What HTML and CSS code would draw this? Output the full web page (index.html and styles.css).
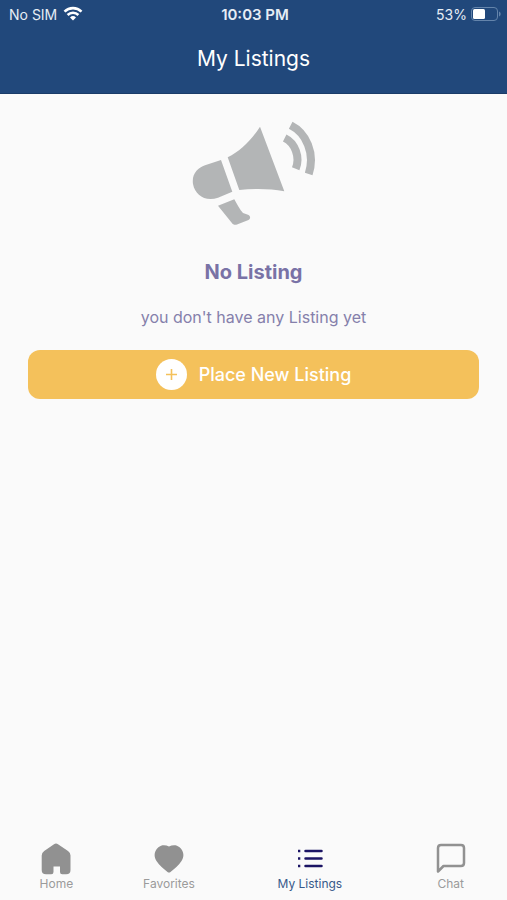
FILE: index.html
```html
<!DOCTYPE html>
<html lang="en">
<head>
  <meta charset="UTF-8" />
  <meta name="viewport" content="width=device-width, initial-scale=1.0"/>
  <title>My Listings</title>
  <link rel="stylesheet" href="styles.css">
</head>
<body>
  <header class="header">
    <div class="status-bar">
      <div class="status-left">
        <span>No SIM</span>
        <svg class="wifi" width="20" height="15" viewBox="0 0 20 15" fill="none" stroke="#fff" stroke-width="2.6">
          <path d="M1.5 5.6a12.2 12.2 0 0 1 17 0" />
          <path d="M4.6 9a7.7 7.7 0 0 1 10.8 0" />
          <path d="M10 14.6l-3-3.1a4.3 4.3 0 0 1 6 0z" fill="#fff" stroke="none" />
        </svg>
      </div>
      <span class="time">10:03 PM</span>
      <div class="status-right">
        <span>53%</span>
        <svg width="30" height="14" viewBox="0 0 30 14">
          <rect x="0.5" y="0.5" width="26" height="13" rx="3.5" fill="none" stroke="#6484ab" />
          <rect x="2" y="2" width="12" height="10" rx="1.5" fill="#fff" />
          <path d="M28 4.5c2.2 1 2.2 4 0 5z" fill="#6484ab" />
        </svg>
      </div>
    </div>
    <h1>My Listings</h1>
  </header>

  <main class="content">
    <svg class="megaphone" width="124" height="106" viewBox="0 0 124 106" fill="#b3b5b6">
      <path d="M29 40L40.3 71.700L26 77.8C13 82 3 75 1 64C-.5 54 6 47.5 13 45.3z" />
      <path d="M35.7 37.3C48 31 58 22 68 6.7L92.3 71.3C78 68.5 62 68.5 47.3 70z" />
      <path d="M26 85.7L42.3 79.3C45 84 48 90 51 93L56 94.8C59 96 58.5 99 56.5 100L45 104.6C42.5 105.3 41 104.5 39.7 102.7z" />
      <g fill="none" stroke="#b3b5b6" stroke-width="8">
        <path d="M92.7 18C103 23 108.5 37 103.7 48.7" />
        <path d="M98.7 5.3C114 13 123.5 33 116.7 54" />
      </g>
    </svg>
    <h2>No Listing</h2>
    <p>you don't have any Listing yet</p>
    <button type="button" class="place-btn">
      <svg width="31" height="31" viewBox="0 0 31 31">
        <circle cx="15.5" cy="15.5" r="15.5" fill="#fff" />
        <path d="M15.5 10v11M10 15.5h11" stroke="#f4c15b" stroke-width="1.6" />
      </svg>
      Place New Listing
    </button>
  </main>

  <nav class="tab-bar">
    <a href="#" class="tab">
      <svg width="30" height="32" viewBox="0 0 30 32" fill="#919191">
        <path d="M13 1.2q2-1.4 4 0l10 6.9q2.500 1.700 2.500 4.400V27q0 4.300-4.300 4.300h-4q-2.200 0-2.200-2.200v-5.700h-6.500v5.700q0 2.200-2.200 2.200H5Q.7 31.300.7 27V12.500q0-2.700 2.500-4.400z" />
      </svg>
      <span>Home</span>
    </a>
    <a href="#" class="tab">
      <svg width="30" height="32" viewBox="0 0 30 32" fill="#919191">
        <path d="M15 3.6C18.5 1.6 22.500 1.600 25.600 4.200C30 8 30.500 13.500 27.500 18C24.500 22.500 20.500 26 16.500 28.900Q15 30 13.500 28.900C9.500 26 5.500 22.500 2.500 18C-.500 13.500 0 8 4.400 4.200C7.500 1.600 11.500 1.600 15 3.600z" />
      </svg>
      <span>Favorites</span>
    </a>
    <a href="#" class="tab tab-wide active">
      <svg width="30" height="32" viewBox="0 0 30 32" fill="none" stroke="#1b1464" stroke-width="2.5">
        <path d="M10.5 8h16M10.5 15.5h16M10.5 23h16" stroke-linecap="round" />
        <path d="M3 8h2.3M3 15.5h2.3M3 23h2.3" />
      </svg>
      <span>My Listings</span>
    </a>
    <a href="#" class="tab">
      <svg width="30" height="32" viewBox="0 0 30 32" fill="none" stroke="#919191" stroke-width="2.5" stroke-linejoin="round">
        <path d="M2 28.500V5q0-3 3-3h20q3 0 3 3v15q0 3-3 3H7.500z" />
      </svg>
      <span>Chat</span>
    </a>
  </nav>
</body>
</html>
```
FILE: styles.css
```css
* {
  box-sizing: border-box;
}

body {
  margin: 0;
  min-height: 100vh;
  display: flex;
  flex-direction: column;
  font-family: Inter, sans-serif;
  background: #fafafa;
}

.header {
  background: #21487b;
  color: #fff;
  padding-bottom: 20px;
  border-bottom: 1px solid #1b3c68;
}

.status-bar {
  display: grid;
  grid-template-columns: 1fr auto 1fr;
  align-items: center;
  height: 28px;
  padding: 0 6px 0 9px;
  font-size: 14px;
  color: #e6edf5;
}

.status-left,
.status-right {
  display: flex;
  align-items: center;
  gap: 6px;
}

.status-right {
  justify-content: flex-end;
  gap: 4px;
}

.wifi {
  margin-bottom: 2px;
}

.time {
  font-size: 15px;
  font-weight: 600;
}

h1 {
  margin: 17px 0 0;
  font-size: 21px;
  line-height: 28px;
  font-weight: 400;
  text-align: center;
}

.content {
  flex: 1;
  display: flex;
  flex-direction: column;
  align-items: center;
  padding: 26px 28px;
}

h2 {
  margin: 32px 0 0;
  font-size: 20px;
  line-height: 28px;
  font-weight: 700;
  color: #7972a6;
}

p {
  margin: 19px 0 21px;
  font-size: 16px;
  line-height: 24px;
  color: #8580ab;
}

.place-btn {
  width: 100%;
  display: flex;
  justify-content: center;
  align-items: center;
  gap: 12px;
  padding: 9px;
  border: none;
  border-radius: 12px;
  background: #f4c15b;
  color: #fff;
  font-family: inherit;
  font-size: 18px;
  font-weight: 500;
  cursor: pointer;
}

.tab-bar {
  display: flex;
  padding-bottom: 7px;
}

.tab {
  flex: 2;
  display: flex;
  flex-direction: column;
  align-items: center;
  font-size: 12px;
  line-height: 18px;
  color: #9b9b9b;
  text-decoration: none;
}

.tab-wide {
  flex: 3;
}

.active {
  color: #37598a;
}
```
